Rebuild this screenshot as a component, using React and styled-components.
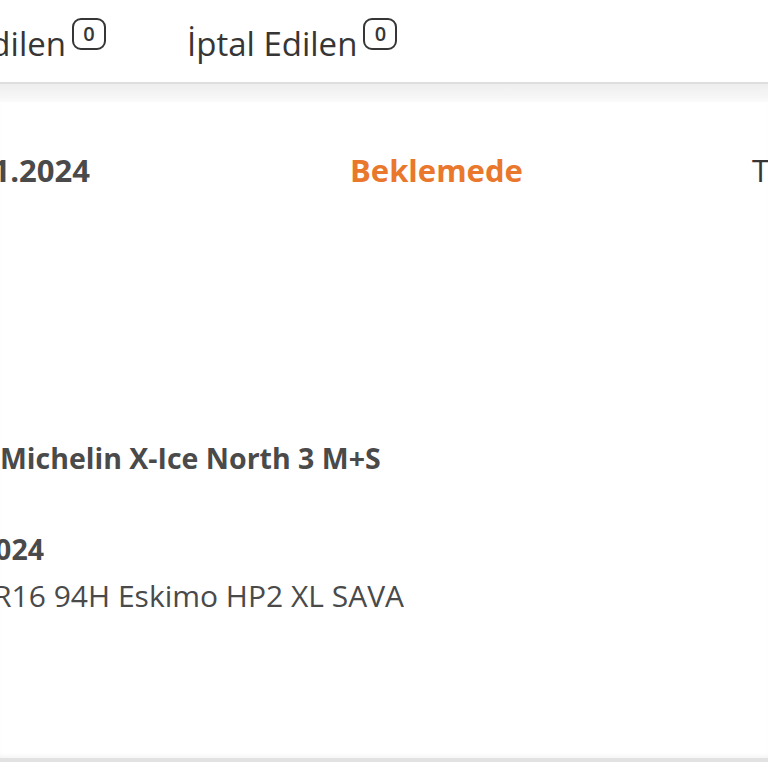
import styled, { createGlobalStyle } from "styled-components";

const Global = createGlobalStyle`
  html, body {
    margin: 0;
    padding: 0;
    background: #ffffff;
    overflow: hidden;
  }
  body {
    font-family: "Open Sans", "Noto Sans", sans-serif;
    color: #4a4a4a;
  }
`;

const Page = styled.div`
  width: 768px;
  height: 768px;
  display: flex;
  flex-direction: column;
  overflow: hidden;
`;

const Tabs = styled.div`
  height: 84px;
  display: flex;
  align-items: flex-start;
  gap: 81px;
  padding-top: 24px;
  border-bottom: 2px solid #dedede;
  box-sizing: border-box;
`;

const Tab = styled.div`
  display: flex;
  align-items: flex-start;
  gap: 6px;
  font-size: 33px;
  line-height: 40px;
  font-weight: 400;
  color: #363636;
  white-space: nowrap;
`;

const Clip = styled.div`
  width: ${(p) => p.$w}px;
  flex-shrink: 0;
  display: flex;
  justify-content: flex-end;
  overflow: hidden;
  white-space: nowrap;
`;

const Badge = styled.span`
  width: 34px;
  height: 32px;
  box-sizing: border-box;
  border: 2px solid #363636;
  border-radius: 9px;
  font-size: 20px;
  line-height: 1;
  font-weight: 600;
  display: flex;
  align-items: center;
  justify-content: center;
  margin-top: -6px;
`;

const Band = styled.div`
  height: 18px;
  background: linear-gradient(#eeeeee, #f6f6f6 70%, #fbfbfb);
`;

const Card = styled.div`
  flex: 1;
  display: flex;
  flex-direction: column;
  padding-top: 50px;
  border-bottom: 4px solid #e2e2e2;
  box-shadow: 0 -4px 4px -2px #f4f4f4 inset;
  margin-bottom: 6px;
`;

const Row = styled.div`
  display: flex;
  align-items: center;
  height: 36px;
  font-size: 31px;
  font-weight: 700;
  white-space: nowrap;
`;

const Status = styled.div`
  color: #e9772c;
  margin-left: 260px;
  width: 402px;
  flex-shrink: 0;
`;

const Total = styled.div`
  font-weight: 500;
  color: #363636;
`;

const Line = styled.div`
  font-size: ${(p) => p.$size}px;
  font-weight: ${(p) => (p.$bold ? 700 : 400)};
  white-space: nowrap;
  margin-top: ${(p) => p.$mt}px;
  line-height: 32px;
`;

export default function App() {
  return (
    <Page>
      <Global />
      <Tabs>
        <Tab>
          <Clip $w={66}>Teslim Edilen</Clip>
          <Badge>0</Badge>
        </Tab>
        <Tab>
          <span>İptal Edilen</span>
          <Badge>0</Badge>
        </Tab>
      </Tabs>
      <Band />
      <Card>
        <Row>
          <Clip $w={90}>14.11.2024</Clip>
          <Status>Beklemede</Status>
          <Total>Toplam</Total>
        </Row>
        <Line $bold $size={28.5} $mt={254}>
          Michelin X-Ice North 3 M+S
        </Line>
        <Line $bold $size={28.5} $mt={59}>
          <Clip $w={44}>14.11.2024</Clip>
        </Line>
        <Line $size={30} $mt={15}>
          <Clip $w={404}>205/55 R16 94H Eskimo HP2 XL SAVA</Clip>
        </Line>
      </Card>
    </Page>
  );
}
